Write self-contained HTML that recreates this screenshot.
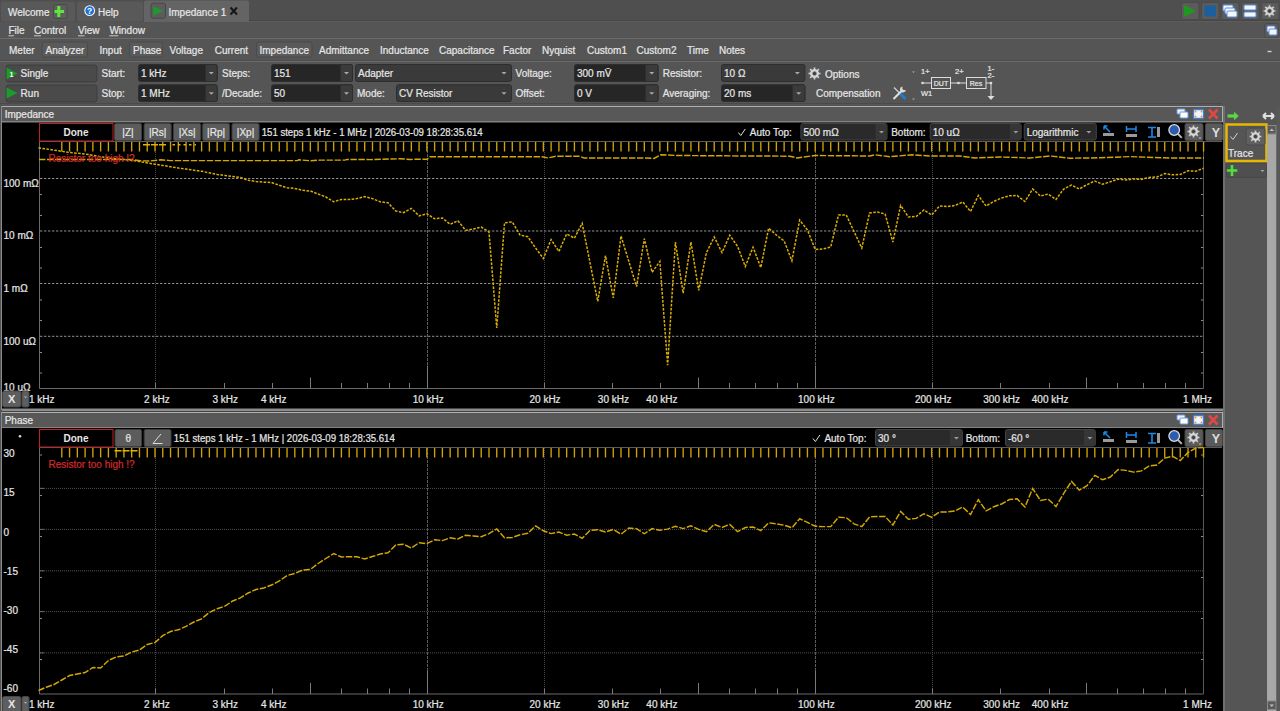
<!DOCTYPE html>
<html><head><meta charset="utf-8"><style>
html,body{margin:0;padding:0;background:#545454;width:1280px;height:711px;overflow:hidden}
svg{display:block;font-family:"Liberation Sans", sans-serif}
</style></head><body>
<svg width="1280" height="711" viewBox="0 0 1280 711">
<rect x="0" y="0" width="1280" height="711" fill="#545454" />
<rect x="0" y="0" width="1280" height="22" fill="#4f4f4f" />
<rect x="1" y="1.5" width="74" height="20" fill="#595959" rx="2" />
<rect x="77" y="1.5" width="66" height="20" fill="#595959" rx="2" />
<line x1="249" y1="20.5" x2="1280" y2="20.5" stroke="#474747" stroke-width="1" />
<line x1="249" y1="21.5" x2="1280" y2="21.5" stroke="#5c5c5c" stroke-width="1" />
<path d="M144 22V2.5a2 2 0 0 1 2-2H247a2 2 0 0 1 2 2V22z" fill="#646464"/>
<text x="8" y="15.8" font-size="10" fill="#e6e6e6" font-weight="normal" text-anchor="start" stroke="#e6e6e6" stroke-width="0.22" >Welcome</text>
<rect x="53.5" y="4.5" width="13.5" height="14" fill="#5e5e5e" stroke="#4a4a4a" stroke-width="1" rx="1.5" />
<path d="M58.8 6v11M54.5 11.5h9.5" stroke="#5ee83a" stroke-width="3"/>
<circle cx="89.7" cy="10.6" r="4.9" fill="#1a72d8" stroke="#f4f4f4" stroke-width="1.1"/>
<text x="89.7" y="13.7" font-size="8.5" fill="#ffffff" font-weight="bold" text-anchor="middle" >?</text>
<text x="98" y="15.8" font-size="10" fill="#e6e6e6" font-weight="normal" text-anchor="start" stroke="#e6e6e6" stroke-width="0.22" >Help</text>
<rect x="151" y="3.2" width="14.5" height="15" fill="#5c5c5c" stroke="#474747" stroke-width="1" rx="2" />
<path d="M153.3 6.2l9.8 4.7l-9.8 4.7z" fill="#1c9a2a"/>
<text x="168.5" y="15.6" font-size="10" fill="#e6e6e6" font-weight="normal" text-anchor="start" stroke="#e6e6e6" stroke-width="0.22" >Impedance 1</text>
<path d="M230.5 7.5l6.5 7M237 7.5l-6.5 7" stroke="#151515" stroke-width="1.9"/>
<rect x="1181.5" y="2.5" width="17.5" height="17" fill="#5b5b5b" stroke="#4a4a4a" stroke-width="1" rx="2" />
<rect x="1201.5" y="2.5" width="17.5" height="17" fill="#5b5b5b" stroke="#4a4a4a" stroke-width="1" rx="2" />
<rect x="1221.5" y="2.5" width="17.5" height="17" fill="#5b5b5b" stroke="#4a4a4a" stroke-width="1" rx="2" />
<rect x="1241.5" y="2.5" width="17.5" height="17" fill="#5b5b5b" stroke="#4a4a4a" stroke-width="1" rx="2" />
<rect x="1261.5" y="2.5" width="17.5" height="17" fill="#5b5b5b" stroke="#4a4a4a" stroke-width="1" rx="2" />
<path d="M1184 5l12 6l-12 6z" fill="#1d9a1d"/>
<rect x="1204.5" y="5.5" width="11.5" height="11" fill="#1c5fa0" rx="1.5" />
<rect x="1223" y="5" width="10" height="6" fill="#f4f6ff" stroke="#5b8fd8" stroke-width="1" rx="1" />
<rect x="1225" y="8" width="10" height="6" fill="#f4f6ff" stroke="#5b8fd8" stroke-width="1" rx="1" />
<rect x="1227" y="11" width="10" height="6" fill="#f4f6ff" stroke="#5b8fd8" stroke-width="1" rx="1" />
<rect x="1244" y="5" width="12" height="5" fill="#f4f6ff" stroke="#5b8fd8" stroke-width="1" rx="1" />
<rect x="1244" y="12" width="12" height="5" fill="#f4f6ff" stroke="#5b8fd8" stroke-width="1" rx="1" />
<path d="M1273.99 10.01L1275.64 10.15L1275.64 11.85L1273.99 11.99L1273.37 13.48L1274.44 14.74L1273.24 15.94L1271.98 14.87L1270.49 15.49L1270.35 17.14L1268.65 17.14L1268.51 15.49L1267.02 14.87L1265.76 15.94L1264.56 14.74L1265.63 13.48L1265.01 11.99L1263.36 11.85L1263.36 10.15L1265.01 10.01L1265.63 8.52L1264.56 7.26L1265.76 6.06L1267.02 7.13L1268.51 6.51L1268.65 4.86L1270.35 4.86L1270.49 6.51L1271.98 7.13L1273.24 6.06L1274.44 7.26L1273.37 8.52Z" fill="#d6d6d6" stroke="#6a6a6a" stroke-width="0.6"/>
<circle cx="1269.5" cy="11" r="2.0" fill="#404040" stroke="#888" stroke-width="0.6"/>
<rect x="0" y="22" width="1280" height="16.5" fill="#555555" />
<line x1="0" y1="38.5" x2="1280" y2="38.5" stroke="#6c6c6c" stroke-width="1" />
<text x="8.5" y="33.8" font-size="10" fill="#e6e6e6" font-weight="normal" text-anchor="start" stroke="#e6e6e6" stroke-width="0.22" >File</text>
<line x1="8.5" y1="35.8" x2="14.0" y2="35.8" stroke="#d8d8d8" stroke-width="0.9" />
<text x="34" y="33.8" font-size="10" fill="#e6e6e6" font-weight="normal" text-anchor="start" stroke="#e6e6e6" stroke-width="0.22" >Control</text>
<line x1="34" y1="35.8" x2="41" y2="35.8" stroke="#d8d8d8" stroke-width="0.9" />
<text x="78" y="33.8" font-size="10" fill="#e6e6e6" font-weight="normal" text-anchor="start" stroke="#e6e6e6" stroke-width="0.22" >View</text>
<line x1="78" y1="35.8" x2="84.5" y2="35.8" stroke="#d8d8d8" stroke-width="0.9" />
<text x="109.4" y="33.8" font-size="10" fill="#e6e6e6" font-weight="normal" text-anchor="start" stroke="#e6e6e6" stroke-width="0.22" >Window</text>
<line x1="109.4" y1="35.8" x2="118.4" y2="35.8" stroke="#d8d8d8" stroke-width="0.9" />
<rect x="1264.5" y="23.5" width="14" height="14" fill="#5a5a5a" stroke="#4a4a4a" stroke-width="1" rx="2" />
<rect x="1267" y="26" width="8" height="6" fill="#f4f6ff" stroke="#5b8fd8" stroke-width="1" rx="1" />
<rect x="1269" y="29" width="8" height="6" fill="#f4f6ff" stroke="#5b8fd8" stroke-width="1" rx="1" />
<rect x="0" y="39" width="1280" height="22.5" fill="#555555" />
<line x1="0" y1="60.5" x2="1280" y2="60.5" stroke="#4d4d4d" stroke-width="1" />
<line x1="0" y1="61.5" x2="1280" y2="61.5" stroke="#6c6c6c" stroke-width="1" />
<rect x="42.1" y="42" width="45.4" height="15" fill="#5a5a5a" stroke="#4b4b4b" stroke-width="1" rx="2" />
<rect x="129.5" y="42" width="33" height="15" fill="#5a5a5a" stroke="#4b4b4b" stroke-width="1" rx="2" />
<rect x="256.5" y="42" width="55.5" height="15" fill="#5a5a5a" stroke="#4b4b4b" stroke-width="1" rx="2" />
<text x="9" y="53.8" font-size="10" fill="#e6e6e6" font-weight="normal" text-anchor="start" stroke="#e6e6e6" stroke-width="0.22" >Meter</text>
<text x="45.5" y="53.8" font-size="10" fill="#e6e6e6" font-weight="normal" text-anchor="start" stroke="#e6e6e6" stroke-width="0.22" >Analyzer</text>
<text x="99.5" y="53.8" font-size="10" fill="#e6e6e6" font-weight="normal" text-anchor="start" stroke="#e6e6e6" stroke-width="0.22" >Input</text>
<text x="133" y="53.8" font-size="10" fill="#e6e6e6" font-weight="normal" text-anchor="start" stroke="#e6e6e6" stroke-width="0.22" >Phase</text>
<text x="169.6" y="53.8" font-size="10" fill="#e6e6e6" font-weight="normal" text-anchor="start" stroke="#e6e6e6" stroke-width="0.22" >Voltage</text>
<text x="214.7" y="53.8" font-size="10" fill="#e6e6e6" font-weight="normal" text-anchor="start" stroke="#e6e6e6" stroke-width="0.22" >Current</text>
<text x="259.5" y="53.8" font-size="10" fill="#e6e6e6" font-weight="normal" text-anchor="start" stroke="#e6e6e6" stroke-width="0.22" >Impedance</text>
<text x="319" y="53.8" font-size="10" fill="#e6e6e6" font-weight="normal" text-anchor="start" stroke="#e6e6e6" stroke-width="0.22" >Admittance</text>
<text x="380" y="53.8" font-size="10" fill="#e6e6e6" font-weight="normal" text-anchor="start" stroke="#e6e6e6" stroke-width="0.22" >Inductance</text>
<text x="439" y="53.8" font-size="10" fill="#e6e6e6" font-weight="normal" text-anchor="start" stroke="#e6e6e6" stroke-width="0.22" >Capacitance</text>
<text x="503" y="53.8" font-size="10" fill="#e6e6e6" font-weight="normal" text-anchor="start" stroke="#e6e6e6" stroke-width="0.22" >Factor</text>
<text x="542" y="53.8" font-size="10" fill="#e6e6e6" font-weight="normal" text-anchor="start" stroke="#e6e6e6" stroke-width="0.22" >Nyquist</text>
<text x="587" y="53.8" font-size="10" fill="#e6e6e6" font-weight="normal" text-anchor="start" stroke="#e6e6e6" stroke-width="0.22" >Custom1</text>
<text x="636.5" y="53.8" font-size="10" fill="#e6e6e6" font-weight="normal" text-anchor="start" stroke="#e6e6e6" stroke-width="0.22" >Custom2</text>
<text x="687" y="53.8" font-size="10" fill="#e6e6e6" font-weight="normal" text-anchor="start" stroke="#e6e6e6" stroke-width="0.22" >Time</text>
<text x="719" y="53.8" font-size="10" fill="#e6e6e6" font-weight="normal" text-anchor="start" stroke="#e6e6e6" stroke-width="0.22" >Notes</text>
<line x1="1267.5" y1="51.5" x2="1271.5" y2="51.5" stroke="#d0d0d0" stroke-width="1.4" />
<rect x="0" y="62" width="1280" height="44" fill="#555555" />
<line x1="0" y1="103.5" x2="1222" y2="103.5" stroke="#4a4a4a" stroke-width="1" />
<rect x="5" y="64" width="93" height="19" fill="#5c5c5c" rx="2.5" />
<rect x="6" y="65" width="91" height="17" fill="#4a4a4a" stroke="#3a3a3a" stroke-width="1" rx="2" />
<rect x="5" y="84" width="93" height="19" fill="#5c5c5c" rx="2.5" />
<rect x="6" y="85" width="91" height="17" fill="#4a4a4a" stroke="#3a3a3a" stroke-width="1" rx="2" />
<path d="M6.5 67.5l11 6l-11 6z" fill="#1c9a2a"/>
<text x="9.6" y="76.5" font-size="7" fill="#ffffff" font-weight="bold" text-anchor="start" >1</text>
<path d="M6.5 87.5l11 5.5l-11 5.5z" fill="#1c9a2a"/>
<text x="20.6" y="77.3" font-size="10" fill="#e6e6e6" font-weight="normal" text-anchor="start" stroke="#e6e6e6" stroke-width="0.22" >Single</text>
<text x="20.6" y="97.1" font-size="10" fill="#e6e6e6" font-weight="normal" text-anchor="start" stroke="#e6e6e6" stroke-width="0.22" >Run</text>
<text x="101.5" y="77.3" font-size="10" fill="#e6e6e6" font-weight="normal" text-anchor="start" stroke="#e6e6e6" stroke-width="0.22" >Start:</text>
<text x="101.5" y="97.1" font-size="10" fill="#e6e6e6" font-weight="normal" text-anchor="start" stroke="#e6e6e6" stroke-width="0.22" >Stop:</text>
<rect x="138.5" y="64.5" width="78.6" height="17" fill="#262626" stroke="#2e2e2e" stroke-width="1" rx="2" />
<rect x="205.5" y="64.5" width="11.599999999999994" height="17" fill="#3b3b3b" stroke="#2e2e2e" stroke-width="1" rx="1.5" />
<path d="M208.8 72.0h5l-2.5 2.5z" fill="#a8a8a8"/>
<text x="141" y="77.2" font-size="10" fill="#e6e6e6" font-weight="normal" text-anchor="start" stroke="#e6e6e6" stroke-width="0.22" >1 kHz</text>
<rect x="138.5" y="84.8" width="78.6" height="16.700000000000003" fill="#262626" stroke="#2e2e2e" stroke-width="1" rx="2" />
<rect x="205.5" y="84.8" width="11.599999999999994" height="16.700000000000003" fill="#3b3b3b" stroke="#2e2e2e" stroke-width="1" rx="1.5" />
<path d="M208.8 92.15h5l-2.5 2.5z" fill="#a8a8a8"/>
<text x="141" y="97.2" font-size="10" fill="#e6e6e6" font-weight="normal" text-anchor="start" stroke="#e6e6e6" stroke-width="0.22" >1 MHz</text>
<text x="222" y="77.3" font-size="10" fill="#e6e6e6" font-weight="normal" text-anchor="start" stroke="#e6e6e6" stroke-width="0.22" >Steps:</text>
<text x="222" y="97.1" font-size="10" fill="#e6e6e6" font-weight="normal" text-anchor="start" stroke="#e6e6e6" stroke-width="0.22" >/Decade:</text>
<rect x="271.5" y="64.5" width="81" height="17" fill="#262626" stroke="#2e2e2e" stroke-width="1" rx="2" />
<rect x="340.5" y="64.5" width="12" height="17" fill="#3b3b3b" stroke="#2e2e2e" stroke-width="1" rx="1.5" />
<path d="M344.0 72.0h5l-2.5 2.5z" fill="#a8a8a8"/>
<text x="274" y="77.2" font-size="10" fill="#e6e6e6" font-weight="normal" text-anchor="start" stroke="#e6e6e6" stroke-width="0.22" >151</text>
<rect x="271.5" y="84.8" width="81" height="16.700000000000003" fill="#262626" stroke="#2e2e2e" stroke-width="1" rx="2" />
<rect x="340.5" y="84.8" width="12" height="16.700000000000003" fill="#3b3b3b" stroke="#2e2e2e" stroke-width="1" rx="1.5" />
<path d="M344.0 92.15h5l-2.5 2.5z" fill="#a8a8a8"/>
<text x="274" y="97.2" font-size="10" fill="#e6e6e6" font-weight="normal" text-anchor="start" stroke="#e6e6e6" stroke-width="0.22" >50</text>
<rect x="355.5" y="64.5" width="156" height="17" fill="#3a3a3a" stroke="#2e2e2e" stroke-width="1" rx="2" />
<path d="M501.5 72.0h5l-2.5 2.5z" fill="#a8a8a8"/>
<text x="358" y="77.2" font-size="10" fill="#e6e6e6" font-weight="normal" text-anchor="start" stroke="#e6e6e6" stroke-width="0.22" >Adapter</text>
<text x="357" y="97.1" font-size="10" fill="#e6e6e6" font-weight="normal" text-anchor="start" stroke="#e6e6e6" stroke-width="0.22" >Mode:</text>
<rect x="396.5" y="84.8" width="115" height="16.700000000000003" fill="#3a3a3a" stroke="#2e2e2e" stroke-width="1" rx="2" />
<path d="M501.5 92.15h5l-2.5 2.5z" fill="#a8a8a8"/>
<text x="399" y="97.2" font-size="10" fill="#e6e6e6" font-weight="normal" text-anchor="start" stroke="#e6e6e6" stroke-width="0.22" >CV Resistor</text>
<text x="515.6" y="77.3" font-size="10" fill="#e6e6e6" font-weight="normal" text-anchor="start" stroke="#e6e6e6" stroke-width="0.22" >Voltage:</text>
<text x="515.6" y="97.1" font-size="10" fill="#e6e6e6" font-weight="normal" text-anchor="start" stroke="#e6e6e6" stroke-width="0.22" >Offset:</text>
<rect x="574.5" y="64.5" width="83.5" height="17" fill="#262626" stroke="#2e2e2e" stroke-width="1" rx="2" />
<rect x="645.5" y="64.5" width="12.5" height="17" fill="#3b3b3b" stroke="#2e2e2e" stroke-width="1" rx="1.5" />
<path d="M649.25 72.0h5l-2.5 2.5z" fill="#a8a8a8"/>
<text x="577" y="77.2" font-size="10" fill="#e6e6e6" font-weight="normal" text-anchor="start" stroke="#e6e6e6" stroke-width="0.22" >300 mV&#772;</text>
<rect x="574.5" y="84.8" width="83.5" height="16.700000000000003" fill="#262626" stroke="#2e2e2e" stroke-width="1" rx="2" />
<rect x="645.5" y="84.8" width="12.5" height="16.700000000000003" fill="#3b3b3b" stroke="#2e2e2e" stroke-width="1" rx="1.5" />
<path d="M649.25 92.15h5l-2.5 2.5z" fill="#a8a8a8"/>
<text x="577" y="97.2" font-size="10" fill="#e6e6e6" font-weight="normal" text-anchor="start" stroke="#e6e6e6" stroke-width="0.22" >0 V</text>
<text x="662.7" y="77.3" font-size="10" fill="#e6e6e6" font-weight="normal" text-anchor="start" stroke="#e6e6e6" stroke-width="0.22" >Resistor:</text>
<text x="662.7" y="97.1" font-size="10" fill="#e6e6e6" font-weight="normal" text-anchor="start" stroke="#e6e6e6" stroke-width="0.22" >Averaging:</text>
<rect x="721.5" y="64.5" width="83.39999999999998" height="17" fill="#3a3a3a" stroke="#2e2e2e" stroke-width="1" rx="2" />
<path d="M794.9 72.0h5l-2.5 2.5z" fill="#a8a8a8"/>
<text x="724" y="77.2" font-size="10" fill="#e6e6e6" font-weight="normal" text-anchor="start" stroke="#e6e6e6" stroke-width="0.22" >10 &#937;</text>
<rect x="721.5" y="84.8" width="83.39999999999998" height="16.700000000000003" fill="#262626" stroke="#2e2e2e" stroke-width="1" rx="2" />
<rect x="792.5" y="84.8" width="12.399999999999977" height="16.700000000000003" fill="#3b3b3b" stroke="#2e2e2e" stroke-width="1" rx="1.5" />
<path d="M796.2 92.15h5l-2.5 2.5z" fill="#a8a8a8"/>
<text x="724" y="97.2" font-size="10" fill="#e6e6e6" font-weight="normal" text-anchor="start" stroke="#e6e6e6" stroke-width="0.22" >20 ms</text>
<path d="M819.09 72.49L820.74 72.64L820.74 74.36L819.09 74.51L818.46 76.03L819.52 77.30L818.30 78.52L817.03 77.46L815.51 78.09L815.36 79.74L813.64 79.74L813.49 78.09L811.97 77.46L810.70 78.52L809.48 77.30L810.54 76.03L809.91 74.51L808.26 74.36L808.26 72.64L809.91 72.49L810.54 70.97L809.48 69.70L810.70 68.48L811.97 69.54L813.49 68.91L813.64 67.26L815.36 67.26L815.51 68.91L817.03 69.54L818.30 68.48L819.52 69.70L818.46 70.97Z" fill="#d6d6d6" stroke="#6a6a6a" stroke-width="0.6"/>
<circle cx="814.5" cy="73.5" r="2.0" fill="#404040" stroke="#888" stroke-width="0.6"/>
<text x="825" y="77.5" font-size="10" fill="#e6e6e6" font-weight="normal" text-anchor="start" stroke="#e6e6e6" stroke-width="0.22" >Options</text>
<text x="816" y="96.8" font-size="10" fill="#e6e6e6" font-weight="normal" text-anchor="start" stroke="#e6e6e6" stroke-width="0.22" >Compensation</text>
<path d="M894 87.5l6 6" stroke="#d0d0d0" stroke-width="1.3"/><path d="M900 93.5l5.5 5.5" stroke="#1a7fd8" stroke-width="2.6"/>
<path d="M893.5 99l8.5-8.5" stroke="#dcdcdc" stroke-width="2.2"/><path d="M902.5 86.5a3 3 0 1 0 3.5 3.5l-2.2 0.2l-1.5-1.5z" fill="#dcdcdc"/>
<path d="M912 71.5h3l-1.5 1.5z M912 98.5h3l-1.5 1.5z" fill="#aaa"/>
<text x="921" y="74" font-size="7.5" fill="#e6e6e6" font-weight="normal" text-anchor="start" stroke="#e6e6e6" stroke-width="0.22" >1+</text>
<text x="955" y="74" font-size="7.5" fill="#e6e6e6" font-weight="normal" text-anchor="start" stroke="#e6e6e6" stroke-width="0.22" >2+</text>
<text x="987.5" y="70.5" font-size="7.5" fill="#e6e6e6" font-weight="normal" text-anchor="start" stroke="#e6e6e6" stroke-width="0.22" >1-</text>
<text x="987.5" y="78" font-size="7.5" fill="#e6e6e6" font-weight="normal" text-anchor="start" stroke="#e6e6e6" stroke-width="0.22" >2-</text>
<text x="921" y="96" font-size="7.5" fill="#e6e6e6" font-weight="normal" text-anchor="start" stroke="#e6e6e6" stroke-width="0.22" >W1</text>
<circle cx="922.5" cy="83" r="1.3" fill="#ddd"/><circle cx="958.5" cy="83" r="1.3" fill="#ddd"/><circle cx="991" cy="83" r="1.3" fill="#ddd"/>
<line x1="922.5" y1="83" x2="931" y2="83" stroke="#ddd" stroke-width="1" />
<line x1="950" y1="83" x2="966" y2="83" stroke="#ddd" stroke-width="1" />
<line x1="986" y1="83" x2="991" y2="83" stroke="#ddd" stroke-width="1" />
<rect x="931.5" y="77.5" width="19" height="11" fill="none" stroke="#ddd" stroke-width="1" />
<rect x="966.5" y="77.5" width="19.5" height="11" fill="none" stroke="#ddd" stroke-width="1" />
<text x="941" y="86" font-size="7" fill="#e6e6e6" font-weight="normal" text-anchor="middle" stroke="#e6e6e6" stroke-width="0.22" >DUT</text>
<text x="976" y="86" font-size="7" fill="#e6e6e6" font-weight="normal" text-anchor="middle" stroke="#e6e6e6" stroke-width="0.22" >Res</text>
<line x1="991" y1="83" x2="991" y2="97" stroke="#ddd" stroke-width="1" />
<path d="M987.5 96h7l-3.5 4z" fill="#ddd"/>
<rect x="1.5" y="106.5" width="1221" height="15.5" fill="#585858" stroke="#aeaeae" stroke-width="1" />
<text x="4.7" y="117.7" font-size="10" fill="#e6e6e6" font-weight="normal" text-anchor="start" stroke="#e6e6e6" stroke-width="0.22" >Impedance</text>
<rect x="1177" y="109" width="8" height="5" fill="#eef2ff" stroke="#6a9ae0" stroke-width="1" rx="0.8" />
<rect x="1180" y="112" width="8" height="6" fill="#ffffff" stroke="#6a9ae0" stroke-width="1" rx="0.8" />
<rect x="1193.5" y="109.5" width="10" height="9" fill="#f4f4f4" stroke="#3d7fe0" stroke-width="1.3" rx="1" />
<circle cx="1195.5" cy="111.5" r="0.9" fill="#f08a30"/>
<circle cx="1201.5" cy="111.5" r="0.9" fill="#f08a30"/>
<circle cx="1195.5" cy="116.5" r="0.9" fill="#f08a30"/>
<circle cx="1201.5" cy="116.5" r="0.9" fill="#f08a30"/>
<path d="M1209 109.5l8.5 9M1217.5 109.5l-8.5 9" stroke="#e04848" stroke-width="2.6"/>
<rect x="1.5" y="412.5" width="1221" height="15.5" fill="#585858" stroke="#aeaeae" stroke-width="1" />
<text x="4.7" y="423.7" font-size="10" fill="#e6e6e6" font-weight="normal" text-anchor="start" stroke="#e6e6e6" stroke-width="0.22" >Phase</text>
<rect x="1177" y="415" width="8" height="5" fill="#eef2ff" stroke="#6a9ae0" stroke-width="1" rx="0.8" />
<rect x="1180" y="418" width="8" height="6" fill="#ffffff" stroke="#6a9ae0" stroke-width="1" rx="0.8" />
<rect x="1193.5" y="415.5" width="10" height="9" fill="#f4f4f4" stroke="#3d7fe0" stroke-width="1.3" rx="1" />
<circle cx="1195.5" cy="417.5" r="0.9" fill="#f08a30"/>
<circle cx="1201.5" cy="417.5" r="0.9" fill="#f08a30"/>
<circle cx="1195.5" cy="422.5" r="0.9" fill="#f08a30"/>
<circle cx="1201.5" cy="422.5" r="0.9" fill="#f08a30"/>
<path d="M1209 415.5l8.5 9M1217.5 415.5l-8.5 9" stroke="#e04848" stroke-width="2.6"/>
<rect x="2" y="122.5" width="1221" height="287" fill="#000000" />
<rect x="2" y="428" width="1221" height="283" fill="#000000" />
<line x1="1.5" y1="106" x2="1.5" y2="410" stroke="#8a8a8a" stroke-width="1" />
<line x1="1.5" y1="412" x2="1.5" y2="711" stroke="#8a8a8a" stroke-width="1" />
<rect x="2" y="408.5" width="1221" height="2.5" fill="#8c8c8c" />
<rect x="2" y="411" width="1221" height="1" fill="#454545" />
<path d="M39.5 141.5V388.5H1203.5" fill="none" stroke="#6a6a6a" stroke-width="1"/>
<line x1="1203.5" y1="141.5" x2="1203.5" y2="388.5" stroke="#585858" stroke-width="1" />
<line x1="39" y1="141.5" x2="1222" y2="141.5" stroke="#5a5a5a" stroke-width="1" />
<line x1="155.5" y1="142" x2="155.5" y2="388.5" stroke="#484848" stroke-width="1" stroke-dasharray="1 1"/>
<line x1="155.5" y1="383.0" x2="155.5" y2="388.5" stroke="#7a7a7a" stroke-width="1" />
<line x1="224.5" y1="383.0" x2="224.5" y2="388.5" stroke="#7a7a7a" stroke-width="1" />
<line x1="272.5" y1="383.0" x2="272.5" y2="388.5" stroke="#7a7a7a" stroke-width="1" />
<line x1="310.5" y1="377.5" x2="310.5" y2="388.5" stroke="#7a7a7a" stroke-width="1" />
<line x1="341.5" y1="383.0" x2="341.5" y2="388.5" stroke="#7a7a7a" stroke-width="1" />
<line x1="367.5" y1="383.0" x2="367.5" y2="388.5" stroke="#7a7a7a" stroke-width="1" />
<line x1="389.5" y1="383.0" x2="389.5" y2="388.5" stroke="#7a7a7a" stroke-width="1" />
<line x1="409.5" y1="383.0" x2="409.5" y2="388.5" stroke="#7a7a7a" stroke-width="1" />
<line x1="427.5" y1="142" x2="427.5" y2="388.5" stroke="#5e5e5e" stroke-width="1" stroke-dasharray="3 1"/>
<line x1="427.5" y1="365.5" x2="427.5" y2="388.5" stroke="#7a7a7a" stroke-width="1" />
<line x1="544.5" y1="142" x2="544.5" y2="388.5" stroke="#484848" stroke-width="1" stroke-dasharray="1 1"/>
<line x1="544.5" y1="383.0" x2="544.5" y2="388.5" stroke="#7a7a7a" stroke-width="1" />
<line x1="612.5" y1="383.0" x2="612.5" y2="388.5" stroke="#7a7a7a" stroke-width="1" />
<line x1="660.5" y1="383.0" x2="660.5" y2="388.5" stroke="#7a7a7a" stroke-width="1" />
<line x1="698.5" y1="377.5" x2="698.5" y2="388.5" stroke="#7a7a7a" stroke-width="1" />
<line x1="729.5" y1="383.0" x2="729.5" y2="388.5" stroke="#7a7a7a" stroke-width="1" />
<line x1="755.5" y1="383.0" x2="755.5" y2="388.5" stroke="#7a7a7a" stroke-width="1" />
<line x1="777.5" y1="383.0" x2="777.5" y2="388.5" stroke="#7a7a7a" stroke-width="1" />
<line x1="797.5" y1="383.0" x2="797.5" y2="388.5" stroke="#7a7a7a" stroke-width="1" />
<line x1="815.5" y1="142" x2="815.5" y2="388.5" stroke="#5e5e5e" stroke-width="1" stroke-dasharray="3 1"/>
<line x1="815.5" y1="365.5" x2="815.5" y2="388.5" stroke="#7a7a7a" stroke-width="1" />
<line x1="932.5" y1="142" x2="932.5" y2="388.5" stroke="#484848" stroke-width="1" stroke-dasharray="1 1"/>
<line x1="932.5" y1="383.0" x2="932.5" y2="388.5" stroke="#7a7a7a" stroke-width="1" />
<line x1="1000.5" y1="383.0" x2="1000.5" y2="388.5" stroke="#7a7a7a" stroke-width="1" />
<line x1="1049.5" y1="383.0" x2="1049.5" y2="388.5" stroke="#7a7a7a" stroke-width="1" />
<line x1="1086.5" y1="377.5" x2="1086.5" y2="388.5" stroke="#7a7a7a" stroke-width="1" />
<line x1="1117.5" y1="383.0" x2="1117.5" y2="388.5" stroke="#7a7a7a" stroke-width="1" />
<line x1="1143.5" y1="383.0" x2="1143.5" y2="388.5" stroke="#7a7a7a" stroke-width="1" />
<line x1="1165.5" y1="383.0" x2="1165.5" y2="388.5" stroke="#7a7a7a" stroke-width="1" />
<line x1="1185.5" y1="383.0" x2="1185.5" y2="388.5" stroke="#7a7a7a" stroke-width="1" />
<line x1="40" y1="178.5" x2="1203" y2="178.5" stroke="#8e8e8e" stroke-width="1" stroke-dasharray="2.4 1.6"/>
<line x1="40" y1="231" x2="1203" y2="231" stroke="#8e8e8e" stroke-width="1" stroke-dasharray="2.4 1.6"/>
<line x1="40" y1="283.5" x2="1203" y2="283.5" stroke="#8e8e8e" stroke-width="1" stroke-dasharray="2.4 1.6"/>
<line x1="40" y1="336.3" x2="1203" y2="336.3" stroke="#8e8e8e" stroke-width="1" stroke-dasharray="2.4 1.6"/>
<line x1="40" y1="194.5" x2="42" y2="194.5" stroke="#8a8a8a" stroke-width="1" />
<line x1="1201" y1="194.5" x2="1203" y2="194.5" stroke="#8a8a8a" stroke-width="1" />
<line x1="40" y1="215.5" x2="42" y2="215.5" stroke="#8a8a8a" stroke-width="1" />
<line x1="1201" y1="215.5" x2="1203" y2="215.5" stroke="#8a8a8a" stroke-width="1" />
<line x1="40" y1="247.5" x2="42" y2="247.5" stroke="#8a8a8a" stroke-width="1" />
<line x1="1201" y1="247.5" x2="1203" y2="247.5" stroke="#8a8a8a" stroke-width="1" />
<line x1="40" y1="268" x2="42" y2="268" stroke="#8a8a8a" stroke-width="1" />
<line x1="1201" y1="268" x2="1203" y2="268" stroke="#8a8a8a" stroke-width="1" />
<line x1="40" y1="300" x2="42" y2="300" stroke="#8a8a8a" stroke-width="1" />
<line x1="1201" y1="300" x2="1203" y2="300" stroke="#8a8a8a" stroke-width="1" />
<line x1="40" y1="320.5" x2="42" y2="320.5" stroke="#8a8a8a" stroke-width="1" />
<line x1="1201" y1="320.5" x2="1203" y2="320.5" stroke="#8a8a8a" stroke-width="1" />
<line x1="40" y1="352.5" x2="42" y2="352.5" stroke="#8a8a8a" stroke-width="1" />
<line x1="1201" y1="352.5" x2="1203" y2="352.5" stroke="#8a8a8a" stroke-width="1" />
<line x1="40" y1="373" x2="42" y2="373" stroke="#8a8a8a" stroke-width="1" />
<line x1="1201" y1="373" x2="1203" y2="373" stroke="#8a8a8a" stroke-width="1" />
<text x="3.5" y="186.5" font-size="10" fill="#e6e6e6" font-weight="normal" text-anchor="start" stroke="#e6e6e6" stroke-width="0.22" >100 m&#937;</text>
<text x="3.5" y="239.3" font-size="10" fill="#e6e6e6" font-weight="normal" text-anchor="start" stroke="#e6e6e6" stroke-width="0.22" >10 m&#937;</text>
<text x="3.5" y="292" font-size="10" fill="#e6e6e6" font-weight="normal" text-anchor="start" stroke="#e6e6e6" stroke-width="0.22" >1 m&#937;</text>
<text x="3.5" y="344.6" font-size="10" fill="#e6e6e6" font-weight="normal" text-anchor="start" stroke="#e6e6e6" stroke-width="0.22" >100 u&#937;</text>
<text x="3.5" y="391.2" font-size="10" fill="#e6e6e6" font-weight="normal" text-anchor="start" stroke="#e6e6e6" stroke-width="0.22" >10 u&#937;</text>
<text x="29" y="402.5" font-size="10" fill="#e6e6e6" font-weight="normal" text-anchor="start" stroke="#e6e6e6" stroke-width="0.22" >1 kHz</text>
<text x="156.85984431675752" y="402.5" font-size="10" fill="#e6e6e6" font-weight="normal" text-anchor="middle" stroke="#e6e6e6" stroke-width="0.22" >2 kHz</text>
<text x="225.218471082173" y="402.5" font-size="10" fill="#e6e6e6" font-weight="normal" text-anchor="middle" stroke="#e6e6e6" stroke-width="0.22" >3 kHz</text>
<text x="273.71968863351503" y="402.5" font-size="10" fill="#e6e6e6" font-weight="normal" text-anchor="middle" stroke="#e6e6e6" stroke-width="0.22" >4 kHz</text>
<text x="428.2" y="402.5" font-size="10" fill="#e6e6e6" font-weight="normal" text-anchor="middle" stroke="#e6e6e6" stroke-width="0.22" >10 kHz</text>
<text x="545.0598443167576" y="402.5" font-size="10" fill="#e6e6e6" font-weight="normal" text-anchor="middle" stroke="#e6e6e6" stroke-width="0.22" >20 kHz</text>
<text x="613.418471082173" y="402.5" font-size="10" fill="#e6e6e6" font-weight="normal" text-anchor="middle" stroke="#e6e6e6" stroke-width="0.22" >30 kHz</text>
<text x="661.9196886335151" y="402.5" font-size="10" fill="#e6e6e6" font-weight="normal" text-anchor="middle" stroke="#e6e6e6" stroke-width="0.22" >40 kHz</text>
<text x="816.4" y="402.5" font-size="10" fill="#e6e6e6" font-weight="normal" text-anchor="middle" stroke="#e6e6e6" stroke-width="0.22" >100 kHz</text>
<text x="933.2598443167575" y="402.5" font-size="10" fill="#e6e6e6" font-weight="normal" text-anchor="middle" stroke="#e6e6e6" stroke-width="0.22" >200 kHz</text>
<text x="1001.618471082173" y="402.5" font-size="10" fill="#e6e6e6" font-weight="normal" text-anchor="middle" stroke="#e6e6e6" stroke-width="0.22" >300 kHz</text>
<text x="1050.1196886335151" y="402.5" font-size="10" fill="#e6e6e6" font-weight="normal" text-anchor="middle" stroke="#e6e6e6" stroke-width="0.22" >400 kHz</text>
<text x="1212" y="402.5" font-size="10" fill="#e6e6e6" font-weight="normal" text-anchor="end" stroke="#e6e6e6" stroke-width="0.22" >1 MHz</text>
<path d="M61.80 142.0V151.5M69.57 142.0V151.5M77.34 142.0V151.5M85.10 142.0V151.5M92.87 142.0V151.5M100.64 142.0V151.5M108.40 142.0V151.5M116.17 142.0V151.5M123.94 142.0V151.5M131.70 142.0V151.5M139.47 142.0V151.5M147.24 142.0V151.5M155.00 142.0V151.5M162.77 142.0V151.5M170.54 142.0V151.5M178.31 142.0V151.5M186.07 142.0V151.5M193.84 142.0V151.5M201.61 142.0V151.5M209.37 142.0V151.5M217.14 142.0V151.5M224.91 142.0V151.5M232.68 142.0V151.5M240.44 142.0V151.5M248.21 142.0V151.5M255.98 142.0V151.5M263.74 142.0V151.5M271.51 142.0V151.5M279.28 142.0V151.5M287.04 142.0V151.5M294.81 142.0V151.5M302.58 142.0V151.5M310.35 142.0V151.5M318.11 142.0V151.5M325.88 142.0V151.5M333.65 142.0V151.5M341.41 142.0V151.5M349.18 142.0V151.5M356.95 142.0V151.5M364.71 142.0V151.5M372.48 142.0V151.5M380.25 142.0V151.5M388.02 142.0V151.5M395.78 142.0V151.5M403.55 142.0V151.5M411.32 142.0V151.5M419.08 142.0V151.5M426.85 142.0V151.5M434.62 142.0V151.5M442.38 142.0V151.5M450.15 142.0V151.5M457.92 142.0V151.5M465.69 142.0V151.5M473.45 142.0V151.5M481.22 142.0V151.5M488.99 142.0V151.5M496.75 142.0V151.5M504.52 142.0V151.5M512.29 142.0V151.5M520.05 142.0V151.5M527.82 142.0V151.5M535.59 142.0V151.5M543.36 142.0V151.5M551.12 142.0V151.5M558.89 142.0V151.5M566.66 142.0V151.5M574.42 142.0V151.5M582.19 142.0V151.5M589.96 142.0V151.5M597.72 142.0V151.5M605.49 142.0V151.5M613.26 142.0V151.5M621.02 142.0V151.5M628.79 142.0V151.5M636.56 142.0V151.5M644.33 142.0V151.5M652.09 142.0V151.5M659.86 142.0V151.5M667.63 142.0V151.5M675.39 142.0V151.5M683.16 142.0V151.5M690.93 142.0V151.5M698.70 142.0V151.5M706.46 142.0V151.5M714.23 142.0V151.5M722.00 142.0V151.5M729.76 142.0V151.5M737.53 142.0V151.5M745.30 142.0V151.5M753.06 142.0V151.5M760.83 142.0V151.5M768.60 142.0V151.5M776.37 142.0V151.5M784.13 142.0V151.5M791.90 142.0V151.5M799.67 142.0V151.5M807.43 142.0V151.5M815.20 142.0V151.5M822.97 142.0V151.5M830.73 142.0V151.5M838.50 142.0V151.5M846.27 142.0V151.5M854.04 142.0V151.5M861.80 142.0V151.5M869.57 142.0V151.5M877.34 142.0V151.5M885.10 142.0V151.5M892.87 142.0V151.5M900.64 142.0V151.5M908.40 142.0V151.5M916.17 142.0V151.5M923.94 142.0V151.5M931.71 142.0V151.5M939.47 142.0V151.5M947.24 142.0V151.5M955.01 142.0V151.5M962.77 142.0V151.5M970.54 142.0V151.5M978.31 142.0V151.5M986.07 142.0V151.5M993.84 142.0V151.5M1001.61 142.0V151.5M1009.38 142.0V151.5M1017.14 142.0V151.5M1024.91 142.0V151.5M1032.68 142.0V151.5M1040.44 142.0V151.5M1048.21 142.0V151.5M1055.98 142.0V151.5M1063.74 142.0V151.5M1071.51 142.0V151.5M1079.28 142.0V151.5M1087.05 142.0V151.5M1094.81 142.0V151.5M1102.58 142.0V151.5M1110.35 142.0V151.5M1118.11 142.0V151.5M1125.88 142.0V151.5M1133.65 142.0V151.5M1141.41 142.0V151.5M1149.18 142.0V151.5M1156.95 142.0V151.5M1164.72 142.0V151.5M1172.48 142.0V151.5M1180.25 142.0V151.5M1188.02 142.0V151.5M1195.78 142.0V151.5M1203.55 142.0V151.5" stroke="#d0a400" stroke-width="1.35"/>
<path d="M143 144.8H166" stroke="#e2b400" stroke-width="1.5" stroke-dasharray="7 1"/>
<path d="M172.5 144.8H196" stroke="#e2b400" stroke-width="1.5" stroke-dasharray="2.5 3"/>
<rect x="2.5" y="391.0" width="18.5" height="16" fill="#5e5e5e" stroke="#474747" stroke-width="1" rx="2" />
<text x="11.7" y="402.5" font-size="11" fill="#e6e6e6" font-weight="bold" text-anchor="middle" >X</text>
<rect x="22" y="391.0" width="7" height="16" fill="#5e5e5e" stroke="#474747" stroke-width="1" rx="1.5" />
<path d="M23.8 396.5h3.5l-1.75 1.8z" fill="#aaa"/>
<path d="M39.5 447.5V694H1203.5" fill="none" stroke="#6a6a6a" stroke-width="1"/>
<line x1="1203.5" y1="447.5" x2="1203.5" y2="694" stroke="#585858" stroke-width="1" />
<line x1="39" y1="447.5" x2="1222" y2="447.5" stroke="#5a5a5a" stroke-width="1" />
<line x1="155.5" y1="448" x2="155.5" y2="694" stroke="#484848" stroke-width="1" stroke-dasharray="1 1"/>
<line x1="155.5" y1="688.5" x2="155.5" y2="694" stroke="#7a7a7a" stroke-width="1" />
<line x1="224.5" y1="688.5" x2="224.5" y2="694" stroke="#7a7a7a" stroke-width="1" />
<line x1="272.5" y1="688.5" x2="272.5" y2="694" stroke="#7a7a7a" stroke-width="1" />
<line x1="310.5" y1="683" x2="310.5" y2="694" stroke="#7a7a7a" stroke-width="1" />
<line x1="341.5" y1="688.5" x2="341.5" y2="694" stroke="#7a7a7a" stroke-width="1" />
<line x1="367.5" y1="688.5" x2="367.5" y2="694" stroke="#7a7a7a" stroke-width="1" />
<line x1="389.5" y1="688.5" x2="389.5" y2="694" stroke="#7a7a7a" stroke-width="1" />
<line x1="409.5" y1="688.5" x2="409.5" y2="694" stroke="#7a7a7a" stroke-width="1" />
<line x1="427.5" y1="448" x2="427.5" y2="694" stroke="#5e5e5e" stroke-width="1" stroke-dasharray="3 1"/>
<line x1="427.5" y1="671" x2="427.5" y2="694" stroke="#7a7a7a" stroke-width="1" />
<line x1="544.5" y1="448" x2="544.5" y2="694" stroke="#484848" stroke-width="1" stroke-dasharray="1 1"/>
<line x1="544.5" y1="688.5" x2="544.5" y2="694" stroke="#7a7a7a" stroke-width="1" />
<line x1="612.5" y1="688.5" x2="612.5" y2="694" stroke="#7a7a7a" stroke-width="1" />
<line x1="660.5" y1="688.5" x2="660.5" y2="694" stroke="#7a7a7a" stroke-width="1" />
<line x1="698.5" y1="683" x2="698.5" y2="694" stroke="#7a7a7a" stroke-width="1" />
<line x1="729.5" y1="688.5" x2="729.5" y2="694" stroke="#7a7a7a" stroke-width="1" />
<line x1="755.5" y1="688.5" x2="755.5" y2="694" stroke="#7a7a7a" stroke-width="1" />
<line x1="777.5" y1="688.5" x2="777.5" y2="694" stroke="#7a7a7a" stroke-width="1" />
<line x1="797.5" y1="688.5" x2="797.5" y2="694" stroke="#7a7a7a" stroke-width="1" />
<line x1="815.5" y1="448" x2="815.5" y2="694" stroke="#5e5e5e" stroke-width="1" stroke-dasharray="3 1"/>
<line x1="815.5" y1="671" x2="815.5" y2="694" stroke="#7a7a7a" stroke-width="1" />
<line x1="932.5" y1="448" x2="932.5" y2="694" stroke="#484848" stroke-width="1" stroke-dasharray="1 1"/>
<line x1="932.5" y1="688.5" x2="932.5" y2="694" stroke="#7a7a7a" stroke-width="1" />
<line x1="1000.5" y1="688.5" x2="1000.5" y2="694" stroke="#7a7a7a" stroke-width="1" />
<line x1="1049.5" y1="688.5" x2="1049.5" y2="694" stroke="#7a7a7a" stroke-width="1" />
<line x1="1086.5" y1="683" x2="1086.5" y2="694" stroke="#7a7a7a" stroke-width="1" />
<line x1="1117.5" y1="688.5" x2="1117.5" y2="694" stroke="#7a7a7a" stroke-width="1" />
<line x1="1143.5" y1="688.5" x2="1143.5" y2="694" stroke="#7a7a7a" stroke-width="1" />
<line x1="1165.5" y1="688.5" x2="1165.5" y2="694" stroke="#7a7a7a" stroke-width="1" />
<line x1="1185.5" y1="688.5" x2="1185.5" y2="694" stroke="#7a7a7a" stroke-width="1" />
<line x1="40" y1="488.4" x2="1203" y2="488.4" stroke="#505050" stroke-width="1" stroke-dasharray="1 1"/>
<line x1="40" y1="488.4" x2="44" y2="488.4" stroke="#6a6a6a" stroke-width="1" />
<line x1="40" y1="529.4" x2="1203" y2="529.4" stroke="#505050" stroke-width="1" stroke-dasharray="1 1"/>
<line x1="40" y1="529.4" x2="44" y2="529.4" stroke="#6a6a6a" stroke-width="1" />
<line x1="40" y1="570.8" x2="1203" y2="570.8" stroke="#505050" stroke-width="1" stroke-dasharray="1 1"/>
<line x1="40" y1="570.8" x2="44" y2="570.8" stroke="#6a6a6a" stroke-width="1" />
<line x1="40" y1="611.6" x2="1203" y2="611.6" stroke="#505050" stroke-width="1" stroke-dasharray="1 1"/>
<line x1="40" y1="611.6" x2="44" y2="611.6" stroke="#6a6a6a" stroke-width="1" />
<line x1="40" y1="652.9" x2="1203" y2="652.9" stroke="#505050" stroke-width="1" stroke-dasharray="1 1"/>
<line x1="40" y1="652.9" x2="44" y2="652.9" stroke="#6a6a6a" stroke-width="1" />
<line x1="40" y1="455" x2="42" y2="455" stroke="#8a8a8a" stroke-width="1" />
<line x1="1201" y1="455" x2="1203" y2="455" stroke="#8a8a8a" stroke-width="1" />
<line x1="40" y1="495.5" x2="42" y2="495.5" stroke="#8a8a8a" stroke-width="1" />
<line x1="1201" y1="495.5" x2="1203" y2="495.5" stroke="#8a8a8a" stroke-width="1" />
<line x1="40" y1="536.5" x2="42" y2="536.5" stroke="#8a8a8a" stroke-width="1" />
<line x1="1201" y1="536.5" x2="1203" y2="536.5" stroke="#8a8a8a" stroke-width="1" />
<line x1="40" y1="577.5" x2="42" y2="577.5" stroke="#8a8a8a" stroke-width="1" />
<line x1="1201" y1="577.5" x2="1203" y2="577.5" stroke="#8a8a8a" stroke-width="1" />
<line x1="40" y1="618.5" x2="42" y2="618.5" stroke="#8a8a8a" stroke-width="1" />
<line x1="1201" y1="618.5" x2="1203" y2="618.5" stroke="#8a8a8a" stroke-width="1" />
<line x1="40" y1="659.5" x2="42" y2="659.5" stroke="#8a8a8a" stroke-width="1" />
<line x1="1201" y1="659.5" x2="1203" y2="659.5" stroke="#8a8a8a" stroke-width="1" />
<text x="3.5" y="457.2" font-size="10" fill="#e6e6e6" font-weight="normal" text-anchor="start" stroke="#e6e6e6" stroke-width="0.22" >30</text>
<text x="3.5" y="496.4" font-size="10" fill="#e6e6e6" font-weight="normal" text-anchor="start" stroke="#e6e6e6" stroke-width="0.22" >15</text>
<text x="3.5" y="535.6" font-size="10" fill="#e6e6e6" font-weight="normal" text-anchor="start" stroke="#e6e6e6" stroke-width="0.22" >0</text>
<text x="3.5" y="574.8" font-size="10" fill="#e6e6e6" font-weight="normal" text-anchor="start" stroke="#e6e6e6" stroke-width="0.22" >-15</text>
<text x="3.5" y="613.7" font-size="10" fill="#e6e6e6" font-weight="normal" text-anchor="start" stroke="#e6e6e6" stroke-width="0.22" >-30</text>
<text x="3.5" y="652.8" font-size="10" fill="#e6e6e6" font-weight="normal" text-anchor="start" stroke="#e6e6e6" stroke-width="0.22" >-45</text>
<text x="3.5" y="692" font-size="10" fill="#e6e6e6" font-weight="normal" text-anchor="start" stroke="#e6e6e6" stroke-width="0.22" >-60</text>
<text x="29" y="708" font-size="10" fill="#e6e6e6" font-weight="normal" text-anchor="start" stroke="#e6e6e6" stroke-width="0.22" >1 kHz</text>
<text x="156.85984431675752" y="708" font-size="10" fill="#e6e6e6" font-weight="normal" text-anchor="middle" stroke="#e6e6e6" stroke-width="0.22" >2 kHz</text>
<text x="225.218471082173" y="708" font-size="10" fill="#e6e6e6" font-weight="normal" text-anchor="middle" stroke="#e6e6e6" stroke-width="0.22" >3 kHz</text>
<text x="273.71968863351503" y="708" font-size="10" fill="#e6e6e6" font-weight="normal" text-anchor="middle" stroke="#e6e6e6" stroke-width="0.22" >4 kHz</text>
<text x="428.2" y="708" font-size="10" fill="#e6e6e6" font-weight="normal" text-anchor="middle" stroke="#e6e6e6" stroke-width="0.22" >10 kHz</text>
<text x="545.0598443167576" y="708" font-size="10" fill="#e6e6e6" font-weight="normal" text-anchor="middle" stroke="#e6e6e6" stroke-width="0.22" >20 kHz</text>
<text x="613.418471082173" y="708" font-size="10" fill="#e6e6e6" font-weight="normal" text-anchor="middle" stroke="#e6e6e6" stroke-width="0.22" >30 kHz</text>
<text x="661.9196886335151" y="708" font-size="10" fill="#e6e6e6" font-weight="normal" text-anchor="middle" stroke="#e6e6e6" stroke-width="0.22" >40 kHz</text>
<text x="816.4" y="708" font-size="10" fill="#e6e6e6" font-weight="normal" text-anchor="middle" stroke="#e6e6e6" stroke-width="0.22" >100 kHz</text>
<text x="933.2598443167575" y="708" font-size="10" fill="#e6e6e6" font-weight="normal" text-anchor="middle" stroke="#e6e6e6" stroke-width="0.22" >200 kHz</text>
<text x="1001.618471082173" y="708" font-size="10" fill="#e6e6e6" font-weight="normal" text-anchor="middle" stroke="#e6e6e6" stroke-width="0.22" >300 kHz</text>
<text x="1050.1196886335151" y="708" font-size="10" fill="#e6e6e6" font-weight="normal" text-anchor="middle" stroke="#e6e6e6" stroke-width="0.22" >400 kHz</text>
<text x="1212" y="708" font-size="10" fill="#e6e6e6" font-weight="normal" text-anchor="end" stroke="#e6e6e6" stroke-width="0.22" >1 MHz</text>
<path d="M61.80 448.0V457.5M69.57 448.0V457.5M77.34 448.0V457.5M85.10 448.0V457.5M92.87 448.0V457.5M100.64 448.0V457.5M108.40 448.0V457.5M116.17 448.0V457.5M123.94 448.0V457.5M131.70 448.0V457.5M139.47 448.0V457.5M147.24 448.0V457.5M155.00 448.0V457.5M162.77 448.0V457.5M170.54 448.0V457.5M178.31 448.0V457.5M186.07 448.0V457.5M193.84 448.0V457.5M201.61 448.0V457.5M209.37 448.0V457.5M217.14 448.0V457.5M224.91 448.0V457.5M232.68 448.0V457.5M240.44 448.0V457.5M248.21 448.0V457.5M255.98 448.0V457.5M263.74 448.0V457.5M271.51 448.0V457.5M279.28 448.0V457.5M287.04 448.0V457.5M294.81 448.0V457.5M302.58 448.0V457.5M310.35 448.0V457.5M318.11 448.0V457.5M325.88 448.0V457.5M333.65 448.0V457.5M341.41 448.0V457.5M349.18 448.0V457.5M356.95 448.0V457.5M364.71 448.0V457.5M372.48 448.0V457.5M380.25 448.0V457.5M388.02 448.0V457.5M395.78 448.0V457.5M403.55 448.0V457.5M411.32 448.0V457.5M419.08 448.0V457.5M426.85 448.0V457.5M434.62 448.0V457.5M442.38 448.0V457.5M450.15 448.0V457.5M457.92 448.0V457.5M465.69 448.0V457.5M473.45 448.0V457.5M481.22 448.0V457.5M488.99 448.0V457.5M496.75 448.0V457.5M504.52 448.0V457.5M512.29 448.0V457.5M520.05 448.0V457.5M527.82 448.0V457.5M535.59 448.0V457.5M543.36 448.0V457.5M551.12 448.0V457.5M558.89 448.0V457.5M566.66 448.0V457.5M574.42 448.0V457.5M582.19 448.0V457.5M589.96 448.0V457.5M597.72 448.0V457.5M605.49 448.0V457.5M613.26 448.0V457.5M621.02 448.0V457.5M628.79 448.0V457.5M636.56 448.0V457.5M644.33 448.0V457.5M652.09 448.0V457.5M659.86 448.0V457.5M667.63 448.0V457.5M675.39 448.0V457.5M683.16 448.0V457.5M690.93 448.0V457.5M698.70 448.0V457.5M706.46 448.0V457.5M714.23 448.0V457.5M722.00 448.0V457.5M729.76 448.0V457.5M737.53 448.0V457.5M745.30 448.0V457.5M753.06 448.0V457.5M760.83 448.0V457.5M768.60 448.0V457.5M776.37 448.0V457.5M784.13 448.0V457.5M791.90 448.0V457.5M799.67 448.0V457.5M807.43 448.0V457.5M815.20 448.0V457.5M822.97 448.0V457.5M830.73 448.0V457.5M838.50 448.0V457.5M846.27 448.0V457.5M854.04 448.0V457.5M861.80 448.0V457.5M869.57 448.0V457.5M877.34 448.0V457.5M885.10 448.0V457.5M892.87 448.0V457.5M900.64 448.0V457.5M908.40 448.0V457.5M916.17 448.0V457.5M923.94 448.0V457.5M931.71 448.0V457.5M939.47 448.0V457.5M947.24 448.0V457.5M955.01 448.0V457.5M962.77 448.0V457.5M970.54 448.0V457.5M978.31 448.0V457.5M986.07 448.0V457.5M993.84 448.0V457.5M1001.61 448.0V457.5M1009.38 448.0V457.5M1017.14 448.0V457.5M1024.91 448.0V457.5M1032.68 448.0V457.5M1040.44 448.0V457.5M1048.21 448.0V457.5M1055.98 448.0V457.5M1063.74 448.0V457.5M1071.51 448.0V457.5M1079.28 448.0V457.5M1087.05 448.0V457.5M1094.81 448.0V457.5M1102.58 448.0V457.5M1110.35 448.0V457.5M1118.11 448.0V457.5M1125.88 448.0V457.5M1133.65 448.0V457.5M1141.41 448.0V457.5M1149.18 448.0V457.5M1156.95 448.0V457.5M1164.72 448.0V457.5M1172.48 448.0V457.5M1180.25 448.0V457.5M1188.02 448.0V457.5M1195.78 448.0V457.5M1203.55 448.0V457.5" stroke="#d0a400" stroke-width="1.35"/>
<path d="M114.5 450.8H137.5" stroke="#e2b400" stroke-width="1.5" stroke-dasharray="7 1"/>
<rect x="2.5" y="696.5" width="18.5" height="16" fill="#5e5e5e" stroke="#474747" stroke-width="1" rx="2" />
<text x="11.7" y="708" font-size="11" fill="#e6e6e6" font-weight="bold" text-anchor="middle" >X</text>
<rect x="22" y="696.5" width="7" height="16" fill="#5e5e5e" stroke="#474747" stroke-width="1" rx="1.5" />
<path d="M23.8 702h3.5l-1.75 1.8z" fill="#aaa"/>
<polyline points="38.50,147.80 46.27,148.97 54.03,150.13 61.80,151.30 69.57,152.50 77.34,153.25 85.10,154.00 92.87,155.33 100.64,156.67 108.40,158.00 116.17,158.77 123.94,159.53 131.70,160.30 139.47,161.60 147.24,162.90 155.00,164.20 162.77,165.47 170.54,166.73 178.31,168.00 186.07,169.08 193.84,170.17 201.61,171.25 209.37,172.82 217.14,174.40 224.91,175.43 232.68,176.47 240.44,177.50 248.21,180.30 255.98,181.50 263.74,182.20 271.51,182.50 279.28,185.30 287.04,187.70 294.81,188.40 302.58,190.30 310.35,191.00 318.11,194.00 325.88,197.00 333.65,201.80 341.41,199.40 349.18,199.40 356.95,198.60 364.71,196.60 372.48,198.60 380.25,201.80 388.02,202.80 395.78,211.00 403.55,212.60 411.32,208.40 419.08,215.90 426.85,213.75 434.62,218.70 442.38,218.00 450.15,224.30 457.92,220.80 465.69,230.30 473.45,229.00 481.22,227.00 488.99,232.00 496.75,328.00 504.52,222.70 512.29,222.00 520.05,235.00 527.82,236.70 535.59,248.00 543.36,258.50 551.12,239.50 558.89,251.50 566.66,233.90 574.42,238.10 582.19,223.40 589.96,262.40 597.72,301.40 605.49,255.70 613.26,297.90 621.02,236.00 628.79,261.30 636.56,286.60 644.33,238.60 652.09,272.30 659.86,261.40 667.63,365.10 675.39,242.10 683.16,293.20 690.93,242.10 698.70,290.40 706.46,252.60 714.23,237.00 722.00,252.60 729.76,235.20 737.53,246.30 745.30,266.50 753.06,247.20 760.83,267.60 768.60,228.20 776.37,235.00 784.13,241.00 791.90,260.70 799.67,220.10 807.43,230.00 815.20,249.50 822.97,249.00 830.73,247.00 838.50,215.00 846.27,215.00 854.04,231.50 861.80,248.00 869.57,213.00 877.34,212.00 885.10,214.00 892.87,242.00 900.64,205.50 908.40,217.00 916.17,216.50 923.94,210.00 931.71,215.00 939.47,206.00 947.24,206.50 955.01,205.50 962.77,202.00 970.54,211.50 978.31,195.50 986.07,206.00 993.84,201.40 1001.61,198.00 1009.38,195.80 1017.14,195.50 1024.91,201.50 1032.68,189.00 1040.44,196.00 1048.21,194.00 1055.98,199.40 1063.74,189.00 1071.51,185.00 1079.28,189.00 1087.05,184.60 1094.81,181.00 1102.58,184.30 1110.35,181.80 1118.11,179.00 1125.88,180.00 1133.65,179.00 1141.41,179.40 1149.18,177.40 1156.95,177.00 1164.72,173.60 1172.48,174.80 1180.25,174.50 1188.02,170.80 1195.78,171.20 1203.55,168.20" fill="none" stroke="#dcae00" stroke-width="1.5" stroke-dasharray="2.6 1.4"/>
<polyline points="39,159.5 132,159.5 140,160.8 150,161 161,159.8 170,160.6 297,160.6 299,159.8 311,160.8 320,160.1 345,160.1 347,159.4 370,159.6 391,159 400,158.8 410,159.4 427,159.2 430,156.8 542,156.7 548,157.9 556,156.2 579,156.2 584,157.9 643,157.9 654,158.4 661,154.8 678,155.5 720,155.8 790,156.2 797,157.9 815,155.5 870,156 875,154.8 890,156.7 912,154.8 930,156 960,156 975,157.9 1000,157 1030,158 1050,156 1070,158.2 1100,157.8 1130,156.6 1170,158 1204,158" fill="none" stroke="#d4a800" stroke-width="1.45" stroke-dasharray="6.4 1.6"/>
<polyline points="38.50,690.50 46.27,687.20 54.03,684.50 61.80,680.00 69.57,675.50 77.34,674.00 85.10,672.50 92.87,667.50 100.64,668.00 108.40,660.50 116.17,657.00 123.94,656.00 131.70,652.00 139.47,650.00 147.24,644.50 155.00,642.50 162.77,635.70 170.54,631.50 178.31,629.80 186.07,626.40 193.84,622.00 201.61,618.80 209.37,612.40 217.14,608.70 224.91,606.20 232.68,601.00 240.44,597.80 248.21,593.00 255.98,589.50 263.74,588.00 271.51,585.00 279.28,581.00 287.04,575.50 294.81,573.50 302.58,570.00 310.35,569.50 318.11,563.50 325.88,558.50 333.65,553.60 341.41,557.00 349.18,556.70 356.95,556.70 364.71,559.00 372.48,556.50 380.25,554.00 388.02,552.80 395.78,545.00 403.55,544.20 411.32,548.00 419.08,542.70 426.85,543.60 434.62,539.80 442.38,540.60 450.15,537.80 457.92,539.00 465.69,535.20 473.45,536.00 481.22,536.70 488.99,533.60 496.75,528.90 504.52,537.80 512.29,537.50 520.05,534.70 527.82,533.30 535.59,525.80 543.36,530.80 551.12,533.60 558.89,532.00 566.66,535.20 574.42,534.00 582.19,538.30 589.96,530.50 597.72,529.70 605.49,532.00 613.26,529.40 621.02,534.20 628.79,528.10 636.56,528.60 644.33,533.75 652.09,528.60 659.86,530.20 667.63,529.10 675.39,526.25 683.16,528.60 690.93,525.80 698.70,529.40 706.46,531.70 714.23,524.40 722.00,527.50 729.76,524.40 737.53,531.70 745.30,527.50 753.06,527.00 760.83,530.60 768.60,522.80 776.37,523.90 784.13,525.20 791.90,527.80 799.67,518.75 807.43,522.30 815.20,526.25 822.97,526.60 830.73,526.60 838.50,517.20 846.27,517.70 854.04,523.90 861.80,526.60 869.57,516.90 877.34,516.40 885.10,516.40 892.87,525.00 900.64,511.40 908.40,519.20 916.17,518.40 923.94,513.75 931.71,517.30 939.47,511.90 947.24,511.90 955.01,510.90 962.77,507.00 970.54,514.50 978.31,499.70 986.07,510.90 993.84,506.70 1001.61,504.00 1009.38,499.50 1017.14,498.80 1024.91,507.00 1032.68,488.50 1040.44,500.50 1048.21,499.10 1055.98,506.50 1063.74,493.40 1071.51,481.40 1079.28,490.10 1087.05,485.70 1094.81,475.40 1102.58,479.80 1110.35,477.00 1118.11,469.60 1125.88,470.40 1133.65,472.10 1141.41,470.90 1149.18,466.00 1156.95,465.00 1164.72,458.10 1172.48,456.20 1180.25,460.60 1188.02,452.40 1195.78,448.00 1203.55,447.50" fill="none" stroke="#d4a800" stroke-width="1.45" stroke-dasharray="6.4 1.6"/>
<text x="48.5" y="162" font-size="10" fill="#d42a2a" font-weight="normal" text-anchor="start" stroke="#d42a2a" stroke-width="0.22" >Resistor too high !?</text>
<text x="48.5" y="468.2" font-size="10" fill="#d42a2a" font-weight="normal" text-anchor="start" stroke="#d42a2a" stroke-width="0.22" >Resistor too high !?</text>
<circle cx="20" cy="436.2" r="1.3" fill="#d8d8d8"/>
<rect x="39.5" y="123.5" width="73.5" height="17.5" fill="#000000" stroke="#c42020" stroke-width="1" />
<text x="76" y="136" font-size="10" fill="#e6e6e6" font-weight="bold" text-anchor="middle" >Done</text>
<rect x="114.5" y="123.5" width="27" height="17" fill="#5c5c5c" stroke="#3e3e3e" stroke-width="1" rx="1.5" />
<text x="128.0" y="135.8" font-size="10" fill="#e6e6e6" font-weight="normal" text-anchor="middle" stroke="#e6e6e6" stroke-width="0.22" >|Z|</text>
<rect x="144.1" y="123.5" width="27.099999999999994" height="17" fill="#5c5c5c" stroke="#3e3e3e" stroke-width="1" rx="1.5" />
<text x="157.64999999999998" y="135.8" font-size="10" fill="#e6e6e6" font-weight="normal" text-anchor="middle" stroke="#e6e6e6" stroke-width="0.22" >|Rs|</text>
<rect x="173.4" y="123.5" width="27.400000000000006" height="17" fill="#5c5c5c" stroke="#3e3e3e" stroke-width="1" rx="1.5" />
<text x="187.10000000000002" y="135.8" font-size="10" fill="#e6e6e6" font-weight="normal" text-anchor="middle" stroke="#e6e6e6" stroke-width="0.22" >|Xs|</text>
<rect x="202.7" y="123.5" width="26.80000000000001" height="17" fill="#5c5c5c" stroke="#3e3e3e" stroke-width="1" rx="1.5" />
<text x="216.1" y="135.8" font-size="10" fill="#e6e6e6" font-weight="normal" text-anchor="middle" stroke="#e6e6e6" stroke-width="0.22" >|Rp|</text>
<rect x="232.0" y="123.5" width="27.100000000000023" height="17" fill="#5c5c5c" stroke="#3e3e3e" stroke-width="1" rx="1.5" />
<text x="245.55" y="135.8" font-size="10" fill="#e6e6e6" font-weight="normal" text-anchor="middle" stroke="#e6e6e6" stroke-width="0.22" >|Xp|</text>
<text x="261.7" y="135.8" font-size="10" fill="#e6e6e6" font-weight="normal" text-anchor="start" stroke="#e6e6e6" stroke-width="0.22" textLength="221" lengthAdjust="spacingAndGlyphs">151 steps 1 kHz - 1 MHz | 2026-03-09 18:28:35.614</text>
<path d="M738.3 132.5l2.5 3.0l4.5 -6.5" fill="none" stroke="#e0e0e0" stroke-width="1"/>
<text x="749.8" y="136" font-size="10" fill="#e6e6e6" font-weight="normal" text-anchor="start" stroke="#e6e6e6" stroke-width="0.22" >Auto Top:</text>
<rect x="800.9" y="123.5" width="86.10000000000002" height="16.5" fill="#2a2a2a" stroke="#444" stroke-width="1" rx="2" />
<rect x="875.5" y="124" width="11.0" height="15.5" fill="#363636" />
<path d="M879.0 131h5l-2.5 2.5z" fill="#9a9a9a"/>
<text x="803.4" y="135.8" font-size="10" fill="#e6e6e6" font-weight="normal" text-anchor="start" stroke="#e6e6e6" stroke-width="0.22" >500 m&#937;</text>
<text x="891.2" y="136" font-size="10" fill="#e6e6e6" font-weight="normal" text-anchor="start" stroke="#e6e6e6" stroke-width="0.22" >Bottom:</text>
<rect x="930.2" y="123.5" width="91.0" height="16.5" fill="#2a2a2a" stroke="#444" stroke-width="1" rx="2" />
<rect x="1010" y="124" width="10.700000000000045" height="15.5" fill="#363636" />
<path d="M1013.35 131h5l-2.5 2.5z" fill="#9a9a9a"/>
<text x="932.7" y="135.8" font-size="10" fill="#e6e6e6" font-weight="normal" text-anchor="start" stroke="#e6e6e6" stroke-width="0.22" >10 u&#937;</text>
<rect x="1024.2" y="123.5" width="72.09999999999991" height="16.5" fill="#2a2a2a" stroke="#444" stroke-width="1" rx="2" />
<path d="M1086.3 131h5l-2.5 2.5z" fill="#9a9a9a"/>
<text x="1026.7" y="135.8" font-size="10" fill="#e6e6e6" font-weight="normal" text-anchor="start" stroke="#e6e6e6" stroke-width="0.22" >Logarithmic</text>
<path d="M1104 126l6 6M1104 126v3.5M1104 126h3.5" stroke="#1a8ae6" stroke-width="1.5" fill="none"/>
<rect x="1103" y="133" width="11" height="3" fill="#9a9a9a" />
<path d="M1126.5 126v6M1136 126v6M1126.5 129h9.5" stroke="#1a8ae6" stroke-width="1.5" fill="none"/>
<rect x="1126" y="134" width="11" height="3" fill="#9a9a9a" />
<path d="M1148 127.5h8M1148 137h8M1152 127.5v9.5" stroke="#1a8ae6" stroke-width="1.6" fill="none"/>
<rect x="1157" y="127" width="3" height="10" fill="#9a9a9a" />
<path d="M1178 134l3.8 3.8" stroke="#bbb" stroke-width="1.8"/><circle cx="1174.2" cy="130" r="5.3" fill="#2c5cb0" stroke="#dcdcdc" stroke-width="1.3"/>
<rect x="1185" y="123.5" width="18" height="17" fill="#5a5a5a" stroke="#444" stroke-width="1" rx="1.5" />
<path d="M1198.09 130.49L1199.74 130.64L1199.74 132.36L1198.09 132.51L1197.46 134.03L1198.52 135.30L1197.30 136.52L1196.03 135.46L1194.51 136.09L1194.36 137.74L1192.64 137.74L1192.49 136.09L1190.97 135.46L1189.70 136.52L1188.48 135.30L1189.54 134.03L1188.91 132.51L1187.26 132.36L1187.26 130.64L1188.91 130.49L1189.54 128.97L1188.48 127.70L1189.70 126.48L1190.97 127.54L1192.49 126.91L1192.64 125.26L1194.36 125.26L1194.51 126.91L1196.03 127.54L1197.30 126.48L1198.52 127.70L1197.46 128.97Z" fill="#d6d6d6" stroke="#6a6a6a" stroke-width="0.6"/>
<circle cx="1193.5" cy="131.5" r="2.0" fill="#404040" stroke="#888" stroke-width="0.6"/>
<path d="M1198.5 137.5h3l-1.5 1.5z" fill="#bbb"/>
<rect x="1205.5" y="123.5" width="17" height="17" fill="#5a5a5a" stroke="#444" stroke-width="1" rx="1.5" />
<text x="1216" y="136.5" font-size="12.5" fill="#dedede" font-weight="bold" text-anchor="middle" >Y</text>
<rect x="39.5" y="429.5" width="73.5" height="17.5" fill="#000000" stroke="#c42020" stroke-width="1" />
<text x="76" y="442" font-size="10" fill="#e6e6e6" font-weight="bold" text-anchor="middle" >Done</text>
<rect x="115.0" y="429.5" width="26.5" height="17" fill="#5c5c5c" stroke="#3e3e3e" stroke-width="1" rx="1.5" />
<text x="128.25" y="441.8" font-size="10" fill="#e6e6e6" font-weight="normal" text-anchor="middle" stroke="#e6e6e6" stroke-width="0.22" >&#952;</text>
<rect x="144.2" y="429.5" width="26.80000000000001" height="17" fill="#5c5c5c" stroke="#3e3e3e" stroke-width="1" rx="1.5" />
<text x="157.6" y="441.8" font-size="10" fill="#e6e6e6" font-weight="normal" text-anchor="middle" stroke="#e6e6e6" stroke-width="0.22" ></text>
<text x="173.8" y="441.8" font-size="10" fill="#e6e6e6" font-weight="normal" text-anchor="start" stroke="#e6e6e6" stroke-width="0.22" textLength="221" lengthAdjust="spacingAndGlyphs">151 steps 1 kHz - 1 MHz | 2026-03-09 18:28:35.614</text>
<path d="M812.9 438.5l2.5 3.0l4.5 -6.5" fill="none" stroke="#e0e0e0" stroke-width="1"/>
<text x="824.4" y="442" font-size="10" fill="#e6e6e6" font-weight="normal" text-anchor="start" stroke="#e6e6e6" stroke-width="0.22" >Auto Top:</text>
<rect x="875.5" y="429.5" width="86.89999999999998" height="16.5" fill="#2a2a2a" stroke="#444" stroke-width="1" rx="2" />
<rect x="950" y="430" width="11.899999999999977" height="15.5" fill="#363636" />
<path d="M953.95 437h5l-2.5 2.5z" fill="#9a9a9a"/>
<text x="878" y="441.8" font-size="10" fill="#e6e6e6" font-weight="normal" text-anchor="start" stroke="#e6e6e6" stroke-width="0.22" >30 &#176;</text>
<text x="965.7" y="442" font-size="10" fill="#e6e6e6" font-weight="normal" text-anchor="start" stroke="#e6e6e6" stroke-width="0.22" >Bottom:</text>
<rect x="1005.5" y="429.5" width="89.79999999999995" height="16.5" fill="#2a2a2a" stroke="#444" stroke-width="1" rx="2" />
<rect x="1084" y="430" width="10.799999999999955" height="15.5" fill="#363636" />
<path d="M1087.4 437h5l-2.5 2.5z" fill="#9a9a9a"/>
<text x="1008" y="441.8" font-size="10" fill="#e6e6e6" font-weight="normal" text-anchor="start" stroke="#e6e6e6" stroke-width="0.22" >-60 &#176;</text>
<path d="M1104 432l6 6M1104 432v3.5M1104 432h3.5" stroke="#1a8ae6" stroke-width="1.5" fill="none"/>
<rect x="1103" y="439" width="11" height="3" fill="#9a9a9a" />
<path d="M1126.5 432v6M1136 432v6M1126.5 435h9.5" stroke="#1a8ae6" stroke-width="1.5" fill="none"/>
<rect x="1126" y="440" width="11" height="3" fill="#9a9a9a" />
<path d="M1148 433.5h8M1148 443h8M1152 433.5v9.5" stroke="#1a8ae6" stroke-width="1.6" fill="none"/>
<rect x="1157" y="433" width="3" height="10" fill="#9a9a9a" />
<path d="M1178 440l3.8 3.8" stroke="#bbb" stroke-width="1.8"/><circle cx="1174.2" cy="436" r="5.3" fill="#2c5cb0" stroke="#dcdcdc" stroke-width="1.3"/>
<rect x="1185" y="429.5" width="18" height="17" fill="#5a5a5a" stroke="#444" stroke-width="1" rx="1.5" />
<path d="M1198.09 436.49L1199.74 436.64L1199.74 438.36L1198.09 438.51L1197.46 440.03L1198.52 441.30L1197.30 442.52L1196.03 441.46L1194.51 442.09L1194.36 443.74L1192.64 443.74L1192.49 442.09L1190.97 441.46L1189.70 442.52L1188.48 441.30L1189.54 440.03L1188.91 438.51L1187.26 438.36L1187.26 436.64L1188.91 436.49L1189.54 434.97L1188.48 433.70L1189.70 432.48L1190.97 433.54L1192.49 432.91L1192.64 431.26L1194.36 431.26L1194.51 432.91L1196.03 433.54L1197.30 432.48L1198.52 433.70L1197.46 434.97Z" fill="#d6d6d6" stroke="#6a6a6a" stroke-width="0.6"/>
<circle cx="1193.5" cy="437.5" r="2.0" fill="#404040" stroke="#888" stroke-width="0.6"/>
<path d="M1198.5 443.5h3l-1.5 1.5z" fill="#bbb"/>
<rect x="1205.5" y="429.5" width="17" height="17" fill="#5a5a5a" stroke="#444" stroke-width="1" rx="1.5" />
<text x="1216" y="442.5" font-size="12.5" fill="#dedede" font-weight="bold" text-anchor="middle" >Y</text>
<path d="M153 443.5l8-9.5M153 443.5h9.5" stroke="#dcdcdc" stroke-width="1" fill="none"/>
<rect x="1223" y="106" width="57" height="605" fill="#555555" />
<rect x="1223" y="106" width="2" height="605" fill="#6e6e6e" />
<path d="M1227.5 116h7" stroke="#5ad845" stroke-width="3.2"/><path d="M1234 111.8l4.8 4.2l-4.8 4.2z" fill="#5ad845"/>
<path d="M1263 116h11M1263 116l3-3M1263 116l3 3M1274 116l-3-3M1274 116l-3 3" stroke="#e0e0e0" stroke-width="2"/>
<rect x="1226.5" y="124.5" width="40" height="36.5" fill="#555555" stroke="#e8b800" stroke-width="2.5" />
<path d="M1230.5 136.5l2.5 3.0l4.5 -6.5" fill="none" stroke="#cfcfcf" stroke-width="1"/>
<rect x="1246" y="128" width="19" height="17" fill="#5f5f5f" stroke="#4a4a4a" stroke-width="1" rx="2" />
<path d="M1259.99 135.51L1261.64 135.65L1261.64 137.35L1259.99 137.49L1259.37 138.98L1260.44 140.24L1259.24 141.44L1257.98 140.37L1256.49 140.99L1256.35 142.64L1254.65 142.64L1254.51 140.99L1253.02 140.37L1251.76 141.44L1250.56 140.24L1251.63 138.98L1251.01 137.49L1249.36 137.35L1249.36 135.65L1251.01 135.51L1251.63 134.02L1250.56 132.76L1251.76 131.56L1253.02 132.63L1254.51 132.01L1254.65 130.36L1256.35 130.36L1256.49 132.01L1257.98 132.63L1259.24 131.56L1260.44 132.76L1259.37 134.02Z" fill="#d6d6d6" stroke="#6a6a6a" stroke-width="0.6"/>
<circle cx="1255.5" cy="136.5" r="2.0" fill="#404040" stroke="#888" stroke-width="0.6"/>
<text x="1228" y="157" font-size="10" fill="#e6e6e6" font-weight="normal" text-anchor="start" stroke="#e6e6e6" stroke-width="0.22" >Trace</text>
<rect x="1226.5" y="163.5" width="40" height="14" fill="#4f4f4f" stroke="#474747" stroke-width="1" rx="2" />
<path d="M1232 165v11M1226.8 170.5h10.5" stroke="#4fe040" stroke-width="2.6"/>
<path d="M1260.5 170h4l-2 2z" fill="#aaa"/>
<rect x="1267" y="125" width="9.5" height="586" fill="#a8a8a8" />
<rect x="1267.5" y="125.5" width="8.5" height="8.5" fill="#5a5a5a" stroke="#8a8a8a" stroke-width="1" />
<path d="M1269.5 131h4.5l-2.25-2.5z" fill="#bdbdbd"/>
<rect x="1267.5" y="701" width="8.5" height="8.5" fill="#5a5a5a" stroke="#8a8a8a" stroke-width="1" />
<path d="M1269.5 704.5h4.5l-2.25 2.5z" fill="#bdbdbd"/>
<rect x="1276.5" y="106" width="3.5" height="605" fill="#585858" />
</svg></body></html>
